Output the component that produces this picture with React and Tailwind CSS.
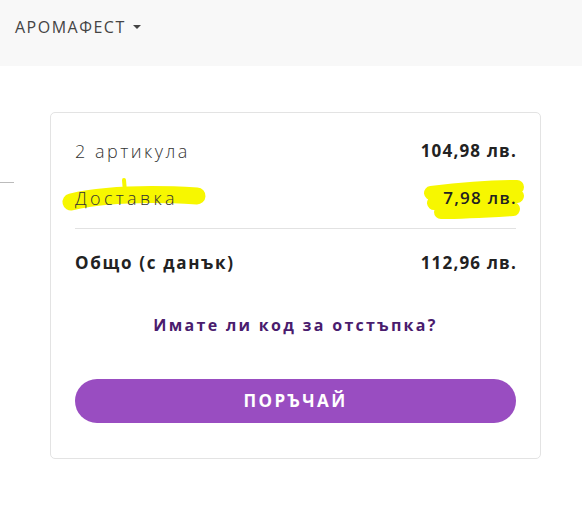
import React from "react";

export default function App() {
  return (
    <div className="w-[582px] h-[505px] bg-white overflow-hidden relative" style={{ fontFamily: '"Open Sans", "Noto Sans", sans-serif' }}>
      <div className="h-[66px] bg-[#f8f8f8] flex items-center pl-[15px] pb-[12px]">
        <span className="text-[16px] text-[#444] tracking-[1.5px]">АРОМАФЕСТ</span>
        <svg width="10" height="6" viewBox="0 0 10 6" className="ml-[6px]"><path d="M1 1h8L5 5z" fill="#444" /></svg>
      </div>
      <div className="absolute left-0 top-[182px] w-[14px] h-px bg-[#bbb]" />
      <div className="relative ml-[50px] mt-[46px] w-[491px] border border-[#e3e3e3] rounded-[5px] px-[24px] pt-[25px] pb-[35px]">
        <svg className="absolute left-0 top-0 pointer-events-none" width="491" height="348" viewBox="0 0 491 348">
          <path d="M20 89 C50 82 95 80 146 83" stroke="#f7f700" strokeWidth="17" strokeLinecap="round" fill="none" />
          <path d="M73 67 L74 79" stroke="#f7f700" strokeWidth="4" strokeLinecap="round" fill="none" />
          <path d="M380 80 C405 77 440 74 466 74 M383 90 C410 87 440 85 466 83 M390 99 C410 99 430 98 462 96" stroke="#f7f700" strokeWidth="14" strokeLinecap="round" fill="none" />
        </svg>
        <div className="relative flex justify-between items-center leading-[26px]">
          <span className="text-[18px] text-[#333] font-light tracking-[2.5px]">2 артикула</span>
          <span className="text-[17px] text-[#222] font-bold tracking-[1.2px] mr-[-1px]">104,98 лв.</span>
        </div>
        <div className="relative flex justify-between items-center leading-[26px] mt-[21px]">
          <span className="text-[18px] text-[#333] font-light tracking-[3.3px]">Доставка</span>
          <span className="text-[17px] text-[#222] font-semibold tracking-[1.3px] mr-[-1px]">7,98 лв.</span>
        </div>
        <div className="h-px bg-[#e2e2e2] mt-[17px]" />
        <div className="flex justify-between items-center leading-[26px] mt-[21px]">
          <span className="text-[17px] text-[#222] font-bold tracking-[1.7px]">Общо (с данък)</span>
          <span className="text-[17px] text-[#222] font-bold tracking-[1.2px] mr-[-1px]">112,96 лв.</span>
        </div>
        <div className="text-center leading-[26px] mt-[36px] text-[16px] font-bold text-[#4a1c6e] tracking-[2.3px]">Имате ли код за отстъпка?</div>
        <button className="mt-[41px] w-full h-[44px] rounded-full bg-[#994dc1] text-white text-[17px] font-bold tracking-[2.4px] flex items-center justify-center">ПОРЪЧАЙ</button>
      </div>
    </div>
  );
}
